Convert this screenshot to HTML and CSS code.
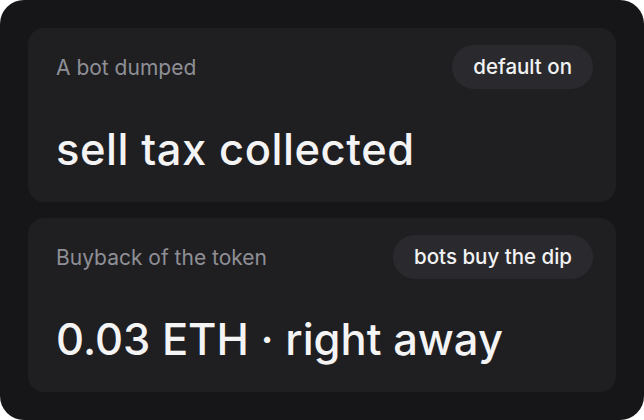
FILE: index.html
```html
<!DOCTYPE html>
<html lang="en">
<head>
<meta charset="utf-8">
<link rel="stylesheet" href="styles.css">
</head>
<body>
<div class="frame">
  <section class="card">
    <div class="head">
      <span class="label">A bot dumped</span>
      <span class="pill">default on</span>
    </div>
    <div class="value value-wide">sell tax collected</div>
  </section>
  <section class="card">
    <div class="head">
      <span class="label">Buyback of the token</span>
      <span class="pill">bots buy the dip</span>
    </div>
    <div class="value">0.03 ETH · right away</div>
  </section>
</div>
</body>
</html>
```
FILE: styles.css
```css
html, body {
  margin: 0;
  padding: 0;
  background: #ffffff;
}
.frame {
  box-sizing: border-box;
  width: 644px;
  height: 420px;
  border-radius: 24px;
  background: #161618;
  padding: 28px;
  display: flex;
  flex-direction: column;
  gap: 16px;
  font-family: Inter, "Liberation Sans", sans-serif;
}
.card {
  flex: 1;
  background: #1f1f22;
  border-radius: 16px;
  padding: 17px 23px 0 28px;
  display: flex;
  flex-direction: column;
}
.head {
  display: flex;
  justify-content: space-between;
  align-items: center;
}
.label {
  font-size: 21px;
  color: #8f8f96;
}
.pill {
  height: 44px;
  line-height: 44px;
  padding: 0 21px;
  border-radius: 999px;
  background: #2a2a2e;
  color: #f2f2f3;
  font-size: 20.5px;
  font-weight: 500;
}
.value {
  margin-top: 38px;
  font-size: 43.5px;
  line-height: 44px;
  font-weight: 500;
  color: #f4f4f5;
}
.value-wide {
  letter-spacing: 0.55px;
}
```
